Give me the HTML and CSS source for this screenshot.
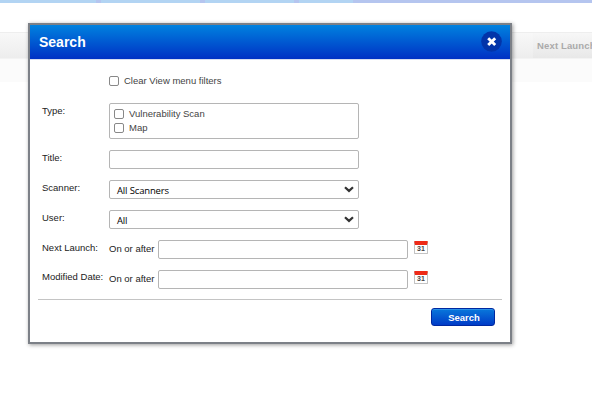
FILE: index.html
```html
<!DOCTYPE html>
<html lang="en">
<head>
<meta charset="utf-8">
<title>Search</title>
<link rel="stylesheet" href="styles.css">
</head>
<body>
<div class="tabs"><i class="tab-a"></i><i class="tab-b"></i><i class="tab-c"></i><i class="tab-d"></i></div>
<div class="list-head"><span class="column">Next Launch</span></div>
<div class="list-row"></div>
<section class="dialog">
  <header class="dialog-head">
    <h1>Search</h1>
    <button class="close" aria-label="Close"><svg width="21" height="21" viewBox="0 0 21 21"><circle cx="10.5" cy="10.5" r="10.3" fill="#0234a9"/><path d="M7.2 7.2l7 6.8M14.2 7.2l-7 6.8" stroke="#fff" stroke-width="2.9"/></svg></button>
  </header>
  <div class="form">
    <label class="check clear"><input type="checkbox">Clear View menu filters</label>
    <div class="row type"><span class="label">Type:</span>
      <div class="box options">
        <label class="check"><input type="checkbox">Vulnerability Scan</label>
        <label class="check"><input type="checkbox">Map</label>
      </div>
    </div>
    <div class="row"><span class="label">Title:</span><div class="box"></div></div>
    <div class="row"><span class="label">Scanner:</span><div class="box select"><span>All Scanners</span><svg width="10" height="7" viewBox="0 0 10 7"><path d="M1 1.2l4 3.7 4-3.7" fill="none" stroke="#333" stroke-width="2.2"/></svg></div></div>
    <div class="row"><span class="label">User:</span><div class="box select"><span>All</span><svg width="10" height="7" viewBox="0 0 10 7"><path d="M1 1.2l4 3.7 4-3.7" fill="none" stroke="#333" stroke-width="2.2"/></svg></div></div>
    <div class="row"><span class="label">Next Launch:</span><span class="when">On or after</span><div class="box"></div><div class="calendar">31</div></div>
    <div class="row last"><span class="label">Modified Date:</span><span class="when">On or after</span><div class="box"></div><div class="calendar">31</div></div>
  </div>
  <footer><button class="submit">Search</button></footer>
</section>
</body>
</html>
```
FILE: styles.css
```css
* { box-sizing: border-box; }
body { margin: 0; width: 592px; height: 400px; overflow: hidden; position: relative; background: #fff; color: #222; font: 9.5px/12px "Liberation Sans", Arial, sans-serif; }
button { border: 0; padding: 0; font: inherit; }
.tabs { display: flex; gap: 5px; height: 3px; background: #b5c5ef; }
.tabs i { flex: none; background: #b2d4f3; }
.tab-a { width: 96px; }
.tab-b { width: 99px; }
.tab-c { width: 89px; }
.tab-d { width: 54px; }
.tab-b { width: 99px; }
.list-head { display: flex; margin-top: 29px; height: 27px; border-top: 1px solid #eee; border-bottom: 1px solid #f3f3f3; background: linear-gradient(#f8f8f8, #ededed); }
.column { margin-left: 533px; padding: 7px 0 0 4px; flex: none; width: 70px; color: #aaa; font-weight: bold; background: linear-gradient(#f7f7f7, #e8e8e8); letter-spacing: .15px; white-space: nowrap; }
.list-row { height: 23px; background: #fbfbfb; }
.dialog { position: absolute; left: 28px; top: 23px; width: 484px; height: 321px; border: 2px solid #7c8087; background: #fff; box-shadow: 1px 1px 4px rgba(0,0,0,.4); }
.dialog-head { display: flex; justify-content: space-between; height: 35px; padding: 6px 8px 0 9px; border-bottom: 1px solid #d5dcf0; background: linear-gradient(#0082df, #0030c4); }
h1 { margin: 3px 0 0; color: #fff; font-size: 14px; line-height: 16px; }
.close { width: 21px; height: 21px; background: none; }
.close svg { display: block; }
.form { height: 240px; margin: 0 8px; padding: 14px 0 0 4px; border-bottom: 1px solid #c4c4c4; }
.check { display: flex; height: 14px; align-items: center; color: #444; }
.check input { appearance: none; width: 10px; height: 10px; margin: 0 5px 0 0; border: 1px solid #888; border-radius: 2px; background: #fff; }
.clear { margin: 0 0 15px 67px; }
.row { display: flex; height: 30px; align-items: flex-start; }
.row.type { height: 47px; }
.label { width: 67px; flex: none; padding-top: 2px; white-space: nowrap; }
.last .label { padding-top: 1px; }
.box { width: 250px; height: 19px; border: 1px solid #b5b5b5; border-radius: 2px; background: #fff; }
.options { height: 36px; padding: 3px 4px; }
.select { display: flex; justify-content: space-between; padding: 4px 4px 0 7px; color: #000; font: 9.5px/12px "Open Sans", sans-serif; letter-spacing: -.15px; }
.select svg { margin-top: 1px; }
.when { width: 49px; padding-top: 3px; white-space: nowrap; }
.calendar { width: 14px; height: 13px; margin: 1px 0 0 6px; border: 1px solid #c3c3c3; border-top: 4px solid #ee2a17; border-radius: 1px; color: #444; font-size: 7px; line-height: 8px; font-weight: bold; text-align: center; }
footer { display: flex; justify-content: flex-end; padding: 8px 15px 0 0; }
.submit { width: 64px; height: 18px; padding: 1px 0 0 2px; border: 1px solid #0028a0; border-radius: 3px; color: #fff; font-weight: bold; background: linear-gradient(#0878db, #003bc7); box-shadow: inset 0 1px #2a91e9; }
```
